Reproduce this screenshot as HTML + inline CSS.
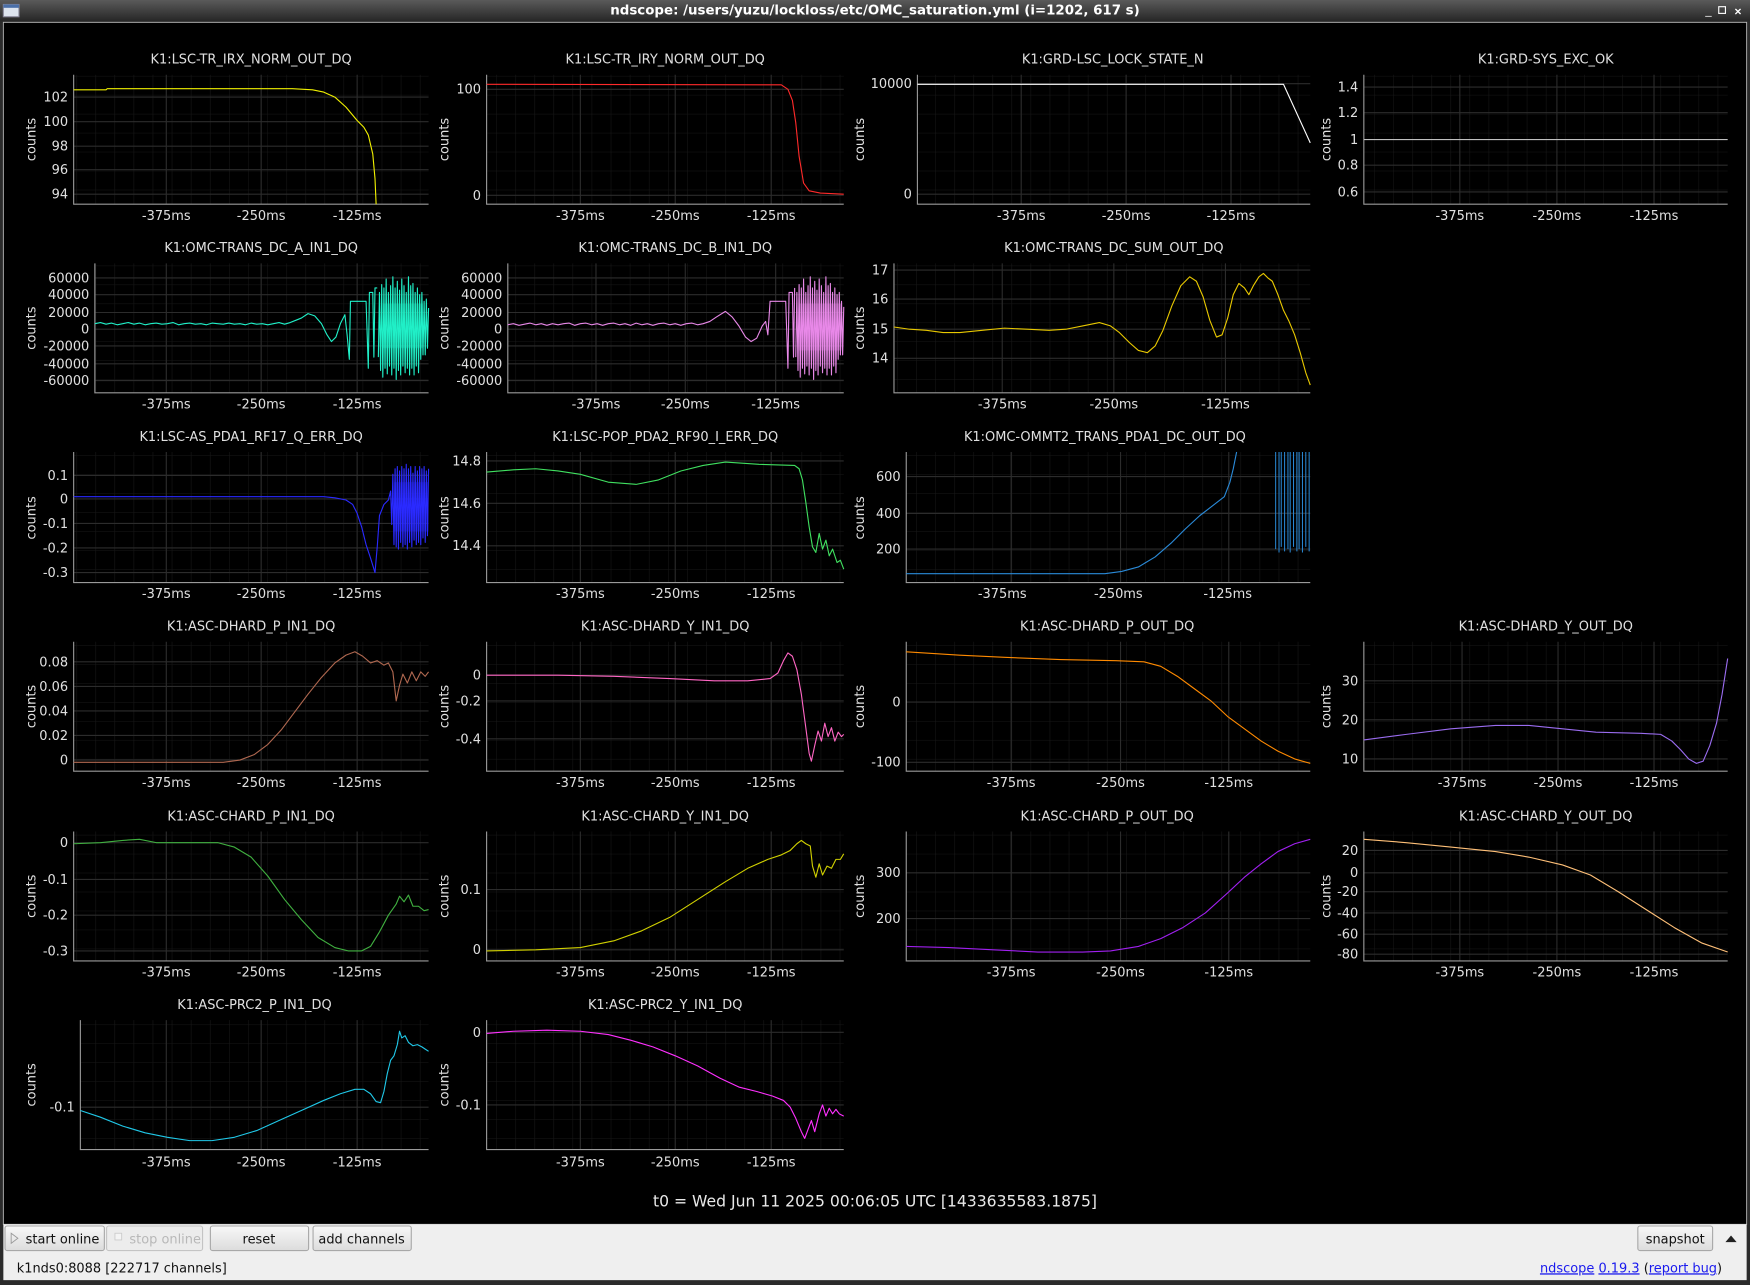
<!DOCTYPE html>
<html><head><meta charset="utf-8"><style>
html,body{margin:0;padding:0;background:#2b2b2b;width:1750px;height:1285px;overflow:hidden}
svg{display:block}
.t{fill:#e0e0e0;font-family:"DejaVu Sans","Liberation Sans",sans-serif;font-size:11.6px}
.ti{fill:#e0e0e0;font-family:"DejaVu Sans","Liberation Sans",sans-serif;font-size:11.6px;text-anchor:middle}
.yl{text-anchor:end}
.xl{text-anchor:middle}
.ax{fill:none;stroke:#9a9a9a;stroke-width:1}
.mj{stroke:#2c2c2c;stroke-width:1}
.c{fill:none;stroke-width:1;stroke-linejoin:round}
.b{font-family:"DejaVu Sans","Liberation Sans",sans-serif;font-size:11.6px;fill:#111;text-anchor:middle}
</style></head><body>
<svg width="1750" height="1285" viewBox="0 0 1750 1285" xmlns="http://www.w3.org/2000/svg">
<defs>
<pattern id="g" width="17.1" height="17" patternUnits="userSpaceOnUse">
<path d="M0 0V17M0 0H17.1" stroke="#171717" stroke-width="1" fill="none"/>
</pattern>
<linearGradient id="tb" x1="0" y1="0" x2="0" y2="1"><stop offset="0" stop-color="#5a5a5a"/><stop offset="1" stop-color="#262626"/></linearGradient>
<linearGradient id="bt" x1="0" y1="0" x2="0" y2="1"><stop offset="0" stop-color="#f8f8f8"/><stop offset="1" stop-color="#dcdcdc"/></linearGradient>
</defs>
<g transform="scale(1.11607)">
<rect x="0" y="0" width="1568" height="1152" fill="#2b2b2b"/>
<rect x="0" y="0" width="1568" height="19" fill="url(#tb)"/>
<rect x="3" y="4" width="14" height="11" fill="#dde4ee" stroke="#889" stroke-width="1"/>
<rect x="3" y="4" width="14" height="3" fill="#4a6fa8"/>
<text x="784" y="13" style="font-family:'DejaVu Sans',sans-serif;font-size:12px;font-weight:bold;fill:#fff;text-anchor:middle">ndscope: /users/yuzu/lockloss/etc/OMC_saturation.yml (i=1202, 617 s)</text>
<text x="1528" y="13" style="font-size:10px;fill:#fff;font-family:sans-serif">_</text>
<rect x="1540" y="6" width="6" height="6" fill="none" stroke="#fff"/>
<text x="1554" y="14" style="font-size:11px;fill:#fff;font-family:sans-serif;font-weight:bold">×</text>
<rect x="3" y="20" width="1562" height="1077" fill="#000" stroke="#bbb" stroke-width="0.8"/>
<rect x="3" y="1097" width="1562" height="50" fill="#efefef"/>

<!-- ================= ROW 1 ================= -->
<text class="ti" x="225" y="57">K1:LSC-TR_IRX_NORM_OUT_DQ</text>
<rect x="66" y="67" width="318" height="116" fill="url(#g)"/>
<path class="mj" d="M149 67V183M234 67V183M320 67V183M66 87H384M66 109H384M66 131H384M66 152H384M66 174H384"/>
<path class="ax" d="M66 67V183H384"/>
<text class="t yl" x="61" y="91">102</text><text class="t yl" x="61" y="113">100</text><text class="t yl" x="61" y="135">98</text><text class="t yl" x="61" y="156">96</text><text class="t yl" x="61" y="178">94</text>
<text class="t" transform="translate(32,125) rotate(-90)" text-anchor="middle">counts</text>
<text class="t xl" x="149" y="197">-375ms</text><text class="t xl" x="234" y="197">-250ms</text><text class="t xl" x="320" y="197">-125ms</text>
<polyline class="c" stroke="#f0f000" points="66,80.5 95,80.5 96,79.5 262,79.5 280,80.5 290,82.5 300,87 310,96 320,108 326,114 330,121 334,138 336,160 337,183"/>

<text class="ti" x="596" y="57">K1:LSC-TR_IRY_NORM_OUT_DQ</text>
<rect x="436" y="67" width="320" height="116" fill="url(#g)"/>
<path class="mj" d="M520 67V183M605 67V183M691 67V183M436 80H756M436 175H756"/>
<path class="ax" d="M436 67V183H756"/>
<text class="t yl" x="431" y="84">100</text><text class="t yl" x="431" y="179">0</text>
<text class="t" transform="translate(402,125) rotate(-90)" text-anchor="middle">counts</text>
<text class="t xl" x="520" y="197">-375ms</text><text class="t xl" x="605" y="197">-250ms</text><text class="t xl" x="691" y="197">-125ms</text>
<polyline class="c" stroke="#ff2a2a" points="436,75.5 700,76 706,80 710,90 713,110 716,140 720,164 725,171 735,173 756,174"/>

<text class="ti" x="997" y="57">K1:GRD-LSC_LOCK_STATE_N</text>
<rect x="822" y="67" width="352" height="116" fill="url(#g)"/>
<path class="mj" d="M915 67V183M1009 67V183M1103 67V183M822 75H1174M822 174H1174"/>
<path class="ax" d="M822 67V183H1174"/>
<text class="t yl" x="817" y="79">10000</text><text class="t yl" x="817" y="178">0</text>
<text class="t" transform="translate(774,125) rotate(-90)" text-anchor="middle">counts</text>
<text class="t xl" x="915" y="197">-375ms</text><text class="t xl" x="1009" y="197">-250ms</text><text class="t xl" x="1103" y="197">-125ms</text>
<polyline class="c" stroke="#ffffff" points="822,75.5 1150,75.5 1174,128"/>

<text class="ti" x="1385" y="57">K1:GRD-SYS_EXC_OK</text>
<rect x="1222" y="67" width="326" height="116" fill="url(#g)"/>
<path class="mj" d="M1308 67V183M1395 67V183M1482 67V183M1222 78H1548M1222 101H1548M1222 148H1548M1222 172H1548"/>
<path class="ax" d="M1222 67V183H1548"/>
<text class="t yl" x="1217" y="82">1.4</text><text class="t yl" x="1217" y="105">1.2</text><text class="t yl" x="1217" y="129">1</text><text class="t yl" x="1217" y="152">0.8</text><text class="t yl" x="1217" y="176">0.6</text>
<text class="t" transform="translate(1192,125) rotate(-90)" text-anchor="middle">counts</text>
<text class="t xl" x="1308" y="197">-375ms</text><text class="t xl" x="1395" y="197">-250ms</text><text class="t xl" x="1482" y="197">-125ms</text>
<line x1="1222" y1="125" x2="1548" y2="125" stroke="#bfbfbf"/>

<!-- ================= ROW 2 ================= -->
<text class="ti" x="234" y="226">K1:OMC-TRANS_DC_A_IN1_DQ</text>
<rect x="85" y="236" width="299" height="116" fill="url(#g)"/>
<path class="mj" d="M149 236V352M234 236V352M320 236V352M85 249H384M85 264H384M85 280H384M85 295H384M85 310H384M85 326H384M85 341H384"/>
<path class="ax" d="M85 236V352H384"/>
<text class="t yl" x="80" y="253">60000</text><text class="t yl" x="80" y="268">40000</text><text class="t yl" x="80" y="284">20000</text><text class="t yl" x="80" y="299">0</text><text class="t yl" x="80" y="314">-20000</text><text class="t yl" x="80" y="330">-40000</text><text class="t yl" x="80" y="345">-60000</text>
<text class="t" transform="translate(32,294) rotate(-90)" text-anchor="middle">counts</text>
<text class="t xl" x="149" y="366">-375ms</text><text class="t xl" x="234" y="366">-250ms</text><text class="t xl" x="320" y="366">-125ms</text>
<polyline class="c" stroke="#20f0c8" points="85,290 90,289 95,290.5 100,289.5 105,291 110,290 115,289 120,290.5 125,289.5 130,291 135,290 140,289.5 145,290.5 150,290 155,289 160,291 165,290 170,289.5 175,290.5 180,290 185,291 190,289.5 195,290 200,290.5 205,289.5 210,290.5 215,290 220,291 225,289.5 230,290.5 235,290 240,291 245,290 250,289 255,290.5 260,289 265,287 270,285 276,281 282,283 288,290 293,300 297,306 301,302 305,290 309,282 311,300 313,322 314,270 328,270 329,300 330,330 331,262 334,262 335,320 336,258 338,258"/>
<polyline class="c" stroke="#20f0c8" points="339,320 340,262 341,332 342,255 343,338 344,258 345,330 346,250 347,335 348,262 349,328 350,256 351,336 352,248 353,330 354,258 355,340 356,252 357,332 358,260 359,336 360,250 361,328 362,256 363,334 364,262 365,330 366,248 367,336 368,256 369,330 370,254 371,336 372,262 373,328 374,258 375,334 376,264 377,322 378,262 379,318 380,270 381,318 382,268 383,312 384,276"/>
<rect x="343" y="272" width="36" height="40" fill="#20f0c8" opacity="0.3"/>

<text class="ti" x="605" y="226">K1:OMC-TRANS_DC_B_IN1_DQ</text>
<rect x="455" y="236" width="301" height="116" fill="url(#g)"/>
<path class="mj" d="M534 236V352M614 236V352M695 236V352M455 249H756M455 264H756M455 280H756M455 295H756M455 310H756M455 326H756M455 341H756"/>
<path class="ax" d="M455 236V352H756"/>
<text class="t yl" x="450" y="253">60000</text><text class="t yl" x="450" y="268">40000</text><text class="t yl" x="450" y="284">20000</text><text class="t yl" x="450" y="299">0</text><text class="t yl" x="450" y="314">-20000</text><text class="t yl" x="450" y="330">-40000</text><text class="t yl" x="450" y="345">-60000</text>
<text class="t" transform="translate(402,294) rotate(-90)" text-anchor="middle">counts</text>
<text class="t xl" x="534" y="366">-375ms</text><text class="t xl" x="614" y="366">-250ms</text><text class="t xl" x="695" y="366">-125ms</text>
<polyline class="c" stroke="#e888e8" points="455,291 460,290 465,291.5 470,290.5 475,289.5 480,291 485,290 490,291.5 495,290 500,291 505,290 510,289.5 515,291.5 520,290 525,289.5 530,291 535,290 540,291.5 545,290 550,289.5 555,291 560,290 565,291.5 570,289.5 575,291 580,290 585,291.5 590,290 595,289.5 600,291 605,290 610,291.5 615,290 620,289.5 625,291 630,290 636,288 642,284 650,279 656,284 662,292 668,302 673,306 678,303 683,292 686,288 688,300 690,270 704,270 705,300 706,330 707,262 710,262 711,320 712,258"/>
<polyline class="c" stroke="#e888e8" points="713,320 714,262 715,332 716,255 717,338 718,258 719,330 720,250 721,335 722,262 723,328 724,256 725,336 726,248 727,330 728,258 729,340 730,252 731,332 732,260 733,336 734,250 735,328 736,256 737,334 738,262 739,330 740,248 741,336 742,256 743,330 744,254 745,336 746,262 747,328 748,258 749,334 750,264 751,322 752,262 753,318 754,270 755,318 756,275"/>
<rect x="716" y="272" width="38" height="42" fill="#e888e8" opacity="0.3"/>

<text class="ti" x="998" y="226">K1:OMC-TRANS_DC_SUM_OUT_DQ</text>
<rect x="801" y="236" width="373" height="116" fill="url(#g)"/>
<path class="mj" d="M898 236V352M998 236V352M1098 236V352M801 242H1174M801 268H1174M801 295H1174M801 321H1174"/>
<path class="ax" d="M801 236V352H1174"/>
<text class="t yl" x="796" y="246">17</text><text class="t yl" x="796" y="272">16</text><text class="t yl" x="796" y="299">15</text><text class="t yl" x="796" y="325">14</text>
<text class="t" transform="translate(774,294) rotate(-90)" text-anchor="middle">counts</text>
<text class="t xl" x="898" y="366">-375ms</text><text class="t xl" x="998" y="366">-250ms</text><text class="t xl" x="1098" y="366">-125ms</text>
<polyline class="c" stroke="#e8c800" stroke-width="1.3" points="801,293 815,295 830,296 845,298 860,298 880,296 900,294 920,295 940,296 955,295 970,292 985,289 995,292 1003,298 1012,307 1020,314 1028,316 1035,310 1042,296 1050,274 1058,256 1066,248 1072,252 1078,266 1084,287 1090,302 1095,300 1100,285 1105,264 1110,254 1115,258 1119,264 1123,256 1128,248 1132,245 1136,249 1140,252 1145,264 1150,278 1155,288 1160,300 1165,316 1170,334 1174,345"/>

<!-- ================= ROW 3 ================= -->
<text class="ti" x="225" y="395">K1:LSC-AS_PDA1_RF17_Q_ERR_DQ</text>
<rect x="66" y="405" width="318" height="117" fill="url(#g)"/>
<path class="mj" d="M149 405V522M234 405V522M320 405V522M66 426H384M66 447H384M66 469H384M66 491H384M66 513H384"/>
<path class="ax" d="M66 405V522H384"/>
<text class="t yl" x="61" y="430">0.1</text><text class="t yl" x="61" y="451">0</text><text class="t yl" x="61" y="473">-0.1</text><text class="t yl" x="61" y="495">-0.2</text><text class="t yl" x="61" y="517">-0.3</text>
<text class="t" transform="translate(32,464) rotate(-90)" text-anchor="middle">counts</text>
<text class="t xl" x="149" y="536">-375ms</text><text class="t xl" x="234" y="536">-250ms</text><text class="t xl" x="320" y="536">-125ms</text>
<polyline class="c" stroke="#2a2aff" points="66,445 290,445 300,446 310,448 316,452 320,460 324,472 328,488 332,500 336,513 338,490 340,462 344,452 348,448 350,440 351,470 352,425 353,488 354,420 355,490 356,418 357,492 358,422 359,486 360,418 361,490 362,420 363,488 364,416 365,492 366,420 367,486 368,418 369,490 370,424 371,484 372,418 373,488 374,422 375,486 376,418 377,488 378,420 379,482 380,418 381,486 382,422 383,480 384,420"/>
<rect x="353" y="432" width="31" height="44" fill="#2a2aff" opacity="0.3"/>

<text class="ti" x="596" y="395">K1:LSC-POP_PDA2_RF90_I_ERR_DQ</text>
<rect x="436" y="405" width="320" height="117" fill="url(#g)"/>
<path class="mj" d="M520 405V522M605 405V522M691 405V522M436 413H756M436 451H756M436 489H756"/>
<path class="ax" d="M436 405V522H756"/>
<text class="t yl" x="431" y="417">14.8</text><text class="t yl" x="431" y="455">14.6</text><text class="t yl" x="431" y="493">14.4</text>
<text class="t" transform="translate(402,464) rotate(-90)" text-anchor="middle">counts</text>
<text class="t xl" x="520" y="536">-375ms</text><text class="t xl" x="605" y="536">-250ms</text><text class="t xl" x="691" y="536">-125ms</text>
<polyline class="c" stroke="#40e060" points="436,423 460,421 480,420 500,422 520,425 545,432 570,434 590,430 610,422 630,417 650,414 680,416 712,417 716,420 719,430 722,450 725,472 728,490 731,495 734,478 737,492 740,484 743,498 746,492 750,504 753,502 756,510"/>

<text class="ti" x="990" y="395">K1:OMC-OMMT2_TRANS_PDA1_DC_OUT_DQ</text>
<rect x="812" y="405" width="362" height="117" fill="url(#g)"/>
<path class="mj" d="M906 405V522M1004 405V522M1101 405V522M812 427H1174M812 460H1174M812 492H1174"/>
<path class="ax" d="M812 405V522H1174"/>
<text class="t yl" x="807" y="431">600</text><text class="t yl" x="807" y="464">400</text><text class="t yl" x="807" y="496">200</text>
<text class="t" transform="translate(774,464) rotate(-90)" text-anchor="middle">counts</text>
<text class="t xl" x="898" y="536">-375ms</text><text class="t xl" x="1002" y="536">-250ms</text><text class="t xl" x="1100" y="536">-125ms</text>
<polyline class="c" stroke="#2a8ad8" points="812,514 850,514 900,514 950,514 990,514 1005,512 1020,508 1035,499 1050,486 1062,474 1075,462 1088,452 1097,445 1102,432 1105,420 1108,405"/>
<path stroke="#2a8ad8" stroke-width="0.9" d="M1143 405V492M1146 405V495M1148 405V490M1151 405V494M1154 405V492M1156 405V495M1159 405V490M1162 405V494M1164 405V492M1167 405V495M1170 405V490M1173 405V494"/>

<!-- ================= ROW 4 ================= -->
<text class="ti" x="225" y="565">K1:ASC-DHARD_P_IN1_DQ</text>
<rect x="66" y="575" width="318" height="116" fill="url(#g)"/>
<path class="mj" d="M149 575V691M234 575V691M320 575V691M66 593H384M66 615H384M66 637H384M66 659H384M66 681H384"/>
<path class="ax" d="M66 575V691H384"/>
<text class="t yl" x="61" y="597">0.08</text><text class="t yl" x="61" y="619">0.06</text><text class="t yl" x="61" y="641">0.04</text><text class="t yl" x="61" y="663">0.02</text><text class="t yl" x="61" y="685">0</text>
<text class="t" transform="translate(32,633) rotate(-90)" text-anchor="middle">counts</text>
<text class="t xl" x="149" y="705">-375ms</text><text class="t xl" x="234" y="705">-250ms</text><text class="t xl" x="320" y="705">-125ms</text>
<polyline class="c" stroke="#b06850" points="66,683 200,683 215,681 228,676 240,667 252,654 264,638 276,622 288,607 300,594 310,587 318,584 325,588 332,594 338,592 344,596 348,594 352,602 355,628 358,614 361,604 365,612 369,602 373,610 377,602 381,606 384,602"/>

<text class="ti" x="596" y="565">K1:ASC-DHARD_Y_IN1_DQ</text>
<rect x="436" y="575" width="320" height="116" fill="url(#g)"/>
<path class="mj" d="M520 575V691M605 575V691M691 575V691M436 605H756M436 628H756M436 662H756"/>
<path class="ax" d="M436 575V691H756"/>
<text class="t yl" x="431" y="609">0</text><text class="t yl" x="431" y="632">-0.2</text><text class="t yl" x="431" y="666">-0.4</text>
<text class="t" transform="translate(402,633) rotate(-90)" text-anchor="middle">counts</text>
<text class="t xl" x="520" y="705">-375ms</text><text class="t xl" x="605" y="705">-250ms</text><text class="t xl" x="691" y="705">-125ms</text>
<polyline class="c" stroke="#ff66c4" points="436,605 500,605 550,606 600,608 640,610 670,610 690,608 697,603 702,592 706,585 710,588 714,600 718,622 722,652 725,675 727,682 730,668 733,655 736,664 739,648 742,660 745,652 748,664 751,656 754,660 756,658"/>

<text class="ti" x="992" y="565">K1:ASC-DHARD_P_OUT_DQ</text>
<rect x="812" y="575" width="362" height="116" fill="url(#g)"/>
<path class="mj" d="M906 575V691M1004 575V691M1101 575V691M812 629H1174M812 683H1174"/>
<path class="ax" d="M812 575V691H1174"/>
<text class="t yl" x="807" y="633">0</text><text class="t yl" x="807" y="687">-100</text>
<text class="t" transform="translate(774,633) rotate(-90)" text-anchor="middle">counts</text>
<text class="t xl" x="906" y="705">-375ms</text><text class="t xl" x="1004" y="705">-250ms</text><text class="t xl" x="1101" y="705">-125ms</text>
<polyline class="c" stroke="#ff8a00" points="812,584 860,587 900,589 950,591 1000,592 1025,593 1040,597 1055,606 1070,617 1085,628 1100,642 1115,653 1130,664 1145,673 1160,680 1174,684"/>

<text class="ti" x="1385" y="565">K1:ASC-DHARD_Y_OUT_DQ</text>
<rect x="1222" y="575" width="326" height="116" fill="url(#g)"/>
<path class="mj" d="M1310 575V691M1396 575V691M1482 575V691M1222 610H1548M1222 645H1548M1222 680H1548"/>
<path class="ax" d="M1222 575V691H1548"/>
<text class="t yl" x="1217" y="614">30</text><text class="t yl" x="1217" y="649">20</text><text class="t yl" x="1217" y="684">10</text>
<text class="t" transform="translate(1192,633) rotate(-90)" text-anchor="middle">counts</text>
<text class="t xl" x="1310" y="705">-375ms</text><text class="t xl" x="1396" y="705">-250ms</text><text class="t xl" x="1482" y="705">-125ms</text>
<polyline class="c" stroke="#9a6cf0" points="1222,663 1260,658 1300,653 1340,650 1370,650 1400,653 1430,656 1470,657 1488,658 1498,664 1506,672 1513,680 1520,684 1526,682 1532,668 1538,648 1543,622 1548,590"/>

<!-- ================= ROW 5 ================= -->
<text class="ti" x="225" y="735">K1:ASC-CHARD_P_IN1_DQ</text>
<rect x="66" y="745" width="318" height="116" fill="url(#g)"/>
<path class="mj" d="M149 745V861M234 745V861M320 745V861M66 755H384M66 788H384M66 820H384M66 852H384"/>
<path class="ax" d="M66 745V861H384"/>
<text class="t yl" x="61" y="759">0</text><text class="t yl" x="61" y="792">-0.1</text><text class="t yl" x="61" y="824">-0.2</text><text class="t yl" x="61" y="856">-0.3</text>
<text class="t" transform="translate(32,803) rotate(-90)" text-anchor="middle">counts</text>
<text class="t xl" x="149" y="875">-375ms</text><text class="t xl" x="234" y="875">-250ms</text><text class="t xl" x="320" y="875">-125ms</text>
<polyline class="c" stroke="#40b040" points="66,756 90,755 110,753 125,752 140,755 170,755 195,755 210,759 225,768 240,785 255,806 270,824 285,840 300,849 312,852 324,852 332,848 340,835 348,820 355,810 358,803 362,808 366,802 370,812 375,812 380,816 384,815"/>

<text class="ti" x="596" y="735">K1:ASC-CHARD_Y_IN1_DQ</text>
<rect x="436" y="745" width="320" height="116" fill="url(#g)"/>
<path class="mj" d="M520 745V861M605 745V861M691 745V861M436 797H756M436 851H756"/>
<path class="ax" d="M436 745V861H756"/>
<text class="t yl" x="431" y="801">0.1</text><text class="t yl" x="431" y="855">0</text>
<text class="t" transform="translate(402,803) rotate(-90)" text-anchor="middle">counts</text>
<text class="t xl" x="520" y="875">-375ms</text><text class="t xl" x="605" y="875">-250ms</text><text class="t xl" x="691" y="875">-125ms</text>
<polyline class="c" stroke="#d0d000" points="436,852 480,851 520,849 550,843 575,834 600,822 625,806 650,790 670,778 688,770 700,766 708,762 714,756 718,753 722,756 726,758 728,776 731,786 734,774 737,784 741,776 745,778 749,770 753,770 756,765"/>

<text class="ti" x="992" y="735">K1:ASC-CHARD_P_OUT_DQ</text>
<rect x="812" y="745" width="362" height="116" fill="url(#g)"/>
<path class="mj" d="M906 745V861M1004 745V861M1101 745V861M812 782H1174M812 823H1174"/>
<path class="ax" d="M812 745V861H1174"/>
<text class="t yl" x="807" y="786">300</text><text class="t yl" x="807" y="827">200</text>
<text class="t" transform="translate(774,803) rotate(-90)" text-anchor="middle">counts</text>
<text class="t xl" x="906" y="875">-375ms</text><text class="t xl" x="1004" y="875">-250ms</text><text class="t xl" x="1101" y="875">-125ms</text>
<polyline class="c" stroke="#a020f0" points="812,848 850,849 890,851 930,853 970,853 995,852 1020,848 1040,841 1060,831 1080,818 1100,800 1115,786 1130,774 1145,763 1160,756 1174,752"/>

<text class="ti" x="1385" y="735">K1:ASC-CHARD_Y_OUT_DQ</text>
<rect x="1222" y="745" width="326" height="116" fill="url(#g)"/>
<path class="mj" d="M1308 745V861M1395 745V861M1482 745V861M1222 762H1548M1222 782H1548M1222 799H1548M1222 818H1548M1222 837H1548M1222 855H1548"/>
<path class="ax" d="M1222 745V861H1548"/>
<text class="t yl" x="1217" y="766">20</text><text class="t yl" x="1217" y="786">0</text><text class="t yl" x="1217" y="803">-20</text><text class="t yl" x="1217" y="822">-40</text><text class="t yl" x="1217" y="841">-60</text><text class="t yl" x="1217" y="859">-80</text>
<text class="t" transform="translate(1192,803) rotate(-90)" text-anchor="middle">counts</text>
<text class="t xl" x="1308" y="875">-375ms</text><text class="t xl" x="1395" y="875">-250ms</text><text class="t xl" x="1482" y="875">-125ms</text>
<polyline class="c" stroke="#ffc078" points="1222,752 1260,755 1300,759 1340,763 1370,768 1400,775 1425,784 1450,799 1475,815 1500,831 1525,845 1548,853"/>

<!-- ================= ROW 6 ================= -->
<text class="ti" x="228" y="904">K1:ASC-PRC2_P_IN1_DQ</text>
<rect x="72" y="914" width="312" height="116" fill="url(#g)"/>
<path class="mj" d="M149 914V1030M234 914V1030M320 914V1030M72 992H384"/>
<path class="ax" d="M72 914V1030H384"/>
<text class="t yl" x="67" y="996">-0.1</text>
<text class="t" transform="translate(32,972) rotate(-90)" text-anchor="middle">counts</text>
<text class="t xl" x="149" y="1045">-375ms</text><text class="t xl" x="234" y="1045">-250ms</text><text class="t xl" x="320" y="1045">-125ms</text>
<polyline class="c" stroke="#20c8e8" points="72,995 90,1001 110,1009 130,1015 150,1019 170,1022 190,1022 210,1019 230,1013 250,1004 270,995 290,986 305,980 318,976 326,976 332,980 337,987 341,988 344,978 347,962 350,950 353,946 356,936 358,924 360,930 363,928 366,934 370,937 374,936 378,938 381,940 384,942"/>

<text class="ti" x="596" y="904">K1:ASC-PRC2_Y_IN1_DQ</text>
<rect x="436" y="914" width="320" height="116" fill="url(#g)"/>
<path class="mj" d="M520 914V1030M605 914V1030M691 914V1030M436 925H756M436 990H756"/>
<path class="ax" d="M436 914V1030H756"/>
<text class="t yl" x="431" y="929">0</text><text class="t yl" x="431" y="994">-0.1</text>
<text class="t" transform="translate(402,972) rotate(-90)" text-anchor="middle">counts</text>
<text class="t xl" x="520" y="1045">-375ms</text><text class="t xl" x="605" y="1045">-250ms</text><text class="t xl" x="691" y="1045">-125ms</text>
<polyline class="c" stroke="#ff30ff" points="436,926 460,924 490,923 520,924 545,927 565,932 585,938 605,946 625,955 645,966 662,974 678,978 692,982 702,986 708,992 713,1002 718,1014 721,1020 724,1012 727,1004 730,1014 734,998 737,990 740,1000 743,993 746,998 749,994 752,998 756,1000"/>

<text x="784" y="1081" style="font-family:'DejaVu Sans',sans-serif;font-size:14px;fill:#e8e8e8;text-anchor:middle">t0 = Wed Jun 11 2025 00:06:05 UTC [1433635583.1875]</text>

<!-- bottom controls -->
<rect x="4.5" y="1098.5" width="89" height="22" rx="2" fill="url(#bt)" stroke="#a8a8a8"/>
<path d="M10 1105l6 4.5-6 4.5z" fill="none" stroke="#999" stroke-width="0.8"/>
<text class="b" x="56" y="1114">start online</text>
<rect x="95.5" y="1098.5" width="86" height="22" rx="2" fill="#ececec" stroke="#c4c4c4"/>
<rect x="103" y="1105" width="6" height="6" fill="#f4f4f4" stroke="#ccc" stroke-width="0.8"/>
<text class="b" x="148" y="1114" style="fill:#b8b8b8">stop online</text>
<rect x="188.5" y="1098.5" width="88" height="22" rx="2" fill="url(#bt)" stroke="#a8a8a8"/>
<text class="b" x="232" y="1114">reset</text>
<rect x="280.5" y="1098.5" width="88" height="22" rx="2" fill="url(#bt)" stroke="#a8a8a8"/>
<text class="b" x="324" y="1114">add channels</text>
<rect x="1467.5" y="1098.5" width="67" height="22" rx="2" fill="url(#bt)" stroke="#a8a8a8"/>
<text class="b" x="1501" y="1114">snapshot</text>
<path d="M1546 1113l5-6 5 6z" fill="#222"/>
<text x="15" y="1140" style="font-family:'DejaVu Sans',sans-serif;font-size:11.6px;fill:#111">k1nds0:8088  [222717 channels]</text>
<text x="1543" y="1140" style="font-family:'DejaVu Sans',sans-serif;font-size:11.6px;fill:#111;text-anchor:end"><tspan fill="#1a1aee" text-decoration="underline">ndscope</tspan> <tspan fill="#1a1aee" text-decoration="underline">0.19.3</tspan> (<tspan fill="#1a1aee" text-decoration="underline">report bug</tspan>)</text>
</g>
</svg>
</body></html>
